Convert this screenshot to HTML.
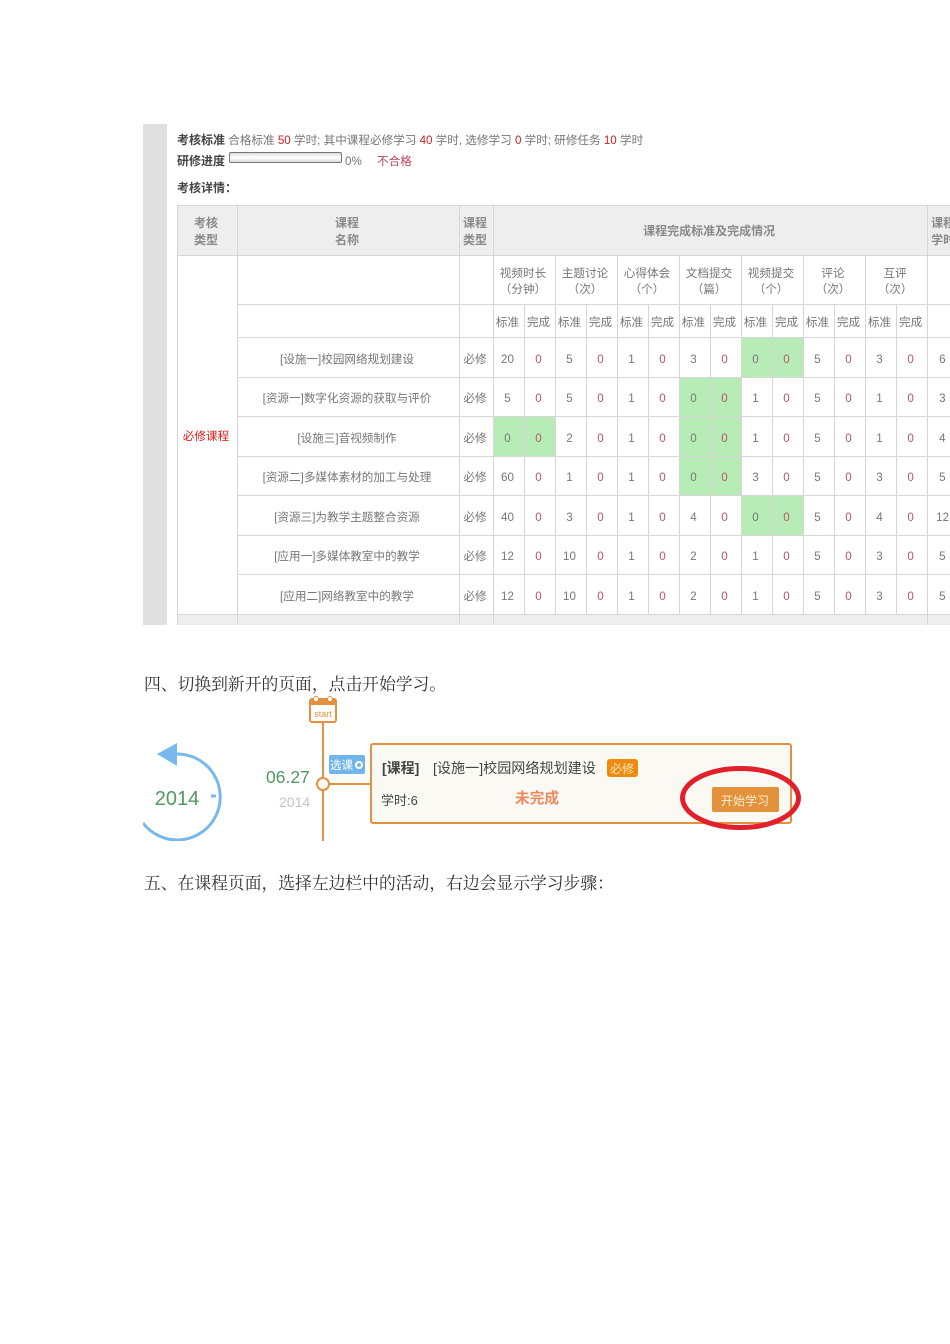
<!DOCTYPE html>
<html lang="zh"><head><meta charset="utf-8"><title>考核详情</title>
<style>
html,body{margin:0;padding:0;background:#fff}
body{position:relative;width:950px;height:1344px;overflow:hidden;font-family:"Liberation Sans","WenQuanYi Zen Hei","Noto Sans CJK SC",sans-serif;font-size:11.6px;color:#777}
.a{position:absolute;white-space:nowrap}
.h{font-family:"Noto Serif CJK SC",serif;font-size:16.8px;color:#333;left:144px}
b{color:#444;font-size:12px}
i{font-style:normal;color:#c22}
table{position:absolute;left:177px;top:205px;border-collapse:collapse;table-layout:fixed;width:810px}
td{border:1px solid #d6d6d6;padding:4px 3px 0 0;text-align:center;line-height:16px;overflow:hidden;white-space:nowrap}
.t td{background:#eee;color:#8a8a8a;font-weight:bold;font-size:12px;line-height:17px;padding-top:2px}
.f td{background:#eee}
.z{color:#b9566a}
.g{background:#b8ecb6}
.l{text-align:left;padding-left:11px}
</style></head><body>
<div class="a" style="left:143px;top:124px;width:24px;height:501px;background:#e0e0e0"></div>
<div class="a" style="left:177px;top:133px;line-height:15px"><b>考核标准</b> 合格标准 <i>50</i> 学时; 其中课程必修学习 <i>40</i> 学时, 选修学习 <i>0</i> 学时; 研修任务 <i>10</i> 学时</div>
<div class="a" style="left:177px;top:154px;line-height:15px"><b>研修进度</b></div>
<div class="a" style="left:229px;top:152px;width:111px;height:9px;border:1px solid #777;border-radius:2px;background:linear-gradient(#ddd,#fff 50%,#ddd)"></div>
<div class="a" style="left:345px;top:154px;line-height:15px">0%</div>
<div class="a" style="left:377px;top:154px;line-height:15px;color:#b9405a">不合格</div>
<div class="a" style="left:177px;top:181px;line-height:15px"><b>考核详情：</b></div>

<div class="a" style="left:0;top:0;width:950px;height:625px;overflow:hidden">
<table>
<colgroup><col style="width:60px"><col style="width:222px"><col style="width:34px"><col span="14" style="width:31px"><col style="width:60px"></colgroup>
<tr class="t" style="height:50px"><td>考核<br>类型</td><td>课程<br>名称</td><td>课程<br>类型</td><td colspan="14">课程完成标准及完成情况</td><td style="text-align:left;padding-left:3px">课程<br>学时</td></tr>
<tr style="height:49px"><td rowspan="9" style="color:#e01c1c;background:#fff">必修课程</td><td></td><td></td><td colspan="2">视频时长<br>（分钟）</td><td colspan="2">主题讨论<br>（次）</td><td colspan="2">心得体会<br>（个）</td><td colspan="2">文档提交<br>（篇）</td><td colspan="2">视频提交<br>（个）</td><td colspan="2">评论<br>（次）</td><td colspan="2">互评<br>（次）</td><td></td></tr>
<tr style="height:33px"><td></td><td></td><td>标准</td><td>完成</td><td>标准</td><td>完成</td><td>标准</td><td>完成</td><td>标准</td><td>完成</td><td>标准</td><td>完成</td><td>标准</td><td>完成</td><td>标准</td><td>完成</td><td></td></tr>
<tr style="height:40px"><td>[设施一]校园网络规划建设</td><td>必修</td><td>20</td><td class="z">0</td><td>5</td><td class="z">0</td><td>1</td><td class="z">0</td><td>3</td><td class="z">0</td><td class="g">0</td><td class="g z">0</td><td>5</td><td class="z">0</td><td>3</td><td class="z">0</td><td class="l">6</td></tr>
<tr style="height:39px"><td>[资源一]数字化资源的获取与评价</td><td>必修</td><td>5</td><td class="z">0</td><td>5</td><td class="z">0</td><td>1</td><td class="z">0</td><td class="g">0</td><td class="g z">0</td><td>1</td><td class="z">0</td><td>5</td><td class="z">0</td><td>1</td><td class="z">0</td><td class="l">3</td></tr>
<tr style="height:40px"><td>[设施三]音视频制作</td><td>必修</td><td class="g">0</td><td class="g z">0</td><td>2</td><td class="z">0</td><td>1</td><td class="z">0</td><td class="g">0</td><td class="g z">0</td><td>1</td><td class="z">0</td><td>5</td><td class="z">0</td><td>1</td><td class="z">0</td><td class="l">4</td></tr>
<tr style="height:39px"><td>[资源二]多媒体素材的加工与处理</td><td>必修</td><td>60</td><td class="z">0</td><td>1</td><td class="z">0</td><td>1</td><td class="z">0</td><td class="g">0</td><td class="g z">0</td><td>3</td><td class="z">0</td><td>5</td><td class="z">0</td><td>3</td><td class="z">0</td><td class="l">5</td></tr>
<tr style="height:40px"><td>[资源三]为教学主题整合资源</td><td>必修</td><td>40</td><td class="z">0</td><td>3</td><td class="z">0</td><td>1</td><td class="z">0</td><td>4</td><td class="z">0</td><td class="g">0</td><td class="g z">0</td><td>5</td><td class="z">0</td><td>4</td><td class="z">0</td><td class="l" style="padding-left:8px">12</td></tr>
<tr style="height:39px"><td>[应用一]多媒体教室中的教学</td><td>必修</td><td>12</td><td class="z">0</td><td>10</td><td class="z">0</td><td>1</td><td class="z">0</td><td>2</td><td class="z">0</td><td>1</td><td class="z">0</td><td>5</td><td class="z">0</td><td>3</td><td class="z">0</td><td class="l">5</td></tr>
<tr style="height:40px"><td>[应用二]网络教室中的教学</td><td>必修</td><td>12</td><td class="z">0</td><td>10</td><td class="z">0</td><td>1</td><td class="z">0</td><td>2</td><td class="z">0</td><td>1</td><td class="z">0</td><td>5</td><td class="z">0</td><td>3</td><td class="z">0</td><td class="l">5</td></tr>
<tr class="f" style="height:20px"><td style="background:#eee"></td><td></td><td></td><td colspan="14"></td><td></td></tr>
</table>
</div>

<div class="a h" style="top:672px;line-height:22px">四、切换到新开的页面，点击开始学习。</div>
<div class="a h" style="top:871px;line-height:22px">五、在课程页面，选择左边栏中的活动，右边会显示学习步骤：</div>

<svg class="a" style="left:0;top:0" width="950" height="900" viewBox="0 0 950 900" font-family="'Liberation Sans','WenQuanYi Zen Hei','Noto Sans CJK SC',sans-serif">
<defs><clipPath id="c"><rect x="143" y="730" width="90" height="111"/></clipPath></defs>
<g clip-path="url(#c)" fill="none" stroke="#78b8ec">
<path d="M176 754A43 43 0 1 1 143 823" stroke-width="3"/>
<path d="M211 796h5" stroke-width="3"/>
</g>
<path d="M157 754L177 743V766Z" fill="#78b8ec"/>
<text x="177" y="805" text-anchor="middle" font-size="20" fill="#4f9a5f">2014</text>
<text x="266" y="783" font-size="17.500" fill="#4f9a5f">06.27</text>
<text x="279" y="807" font-size="14" fill="#c4c4c4">2014</text>
<path d="M323 722V841" stroke="#e3913f" stroke-width="2"/>
<path d="M329 784H371" stroke="#e3913f" stroke-width="2"/>
<circle cx="323" cy="784" r="6" fill="#fff" stroke="#e3913f" stroke-width="2"/>
<rect x="310" y="699" width="26" height="23" rx="2" fill="#fff" stroke="#e3913f" stroke-width="2"/>
<rect x="310" y="699" width="26" height="6" fill="#e3913f"/>
<circle cx="316" cy="699" r="2.500" fill="#fff" stroke="#e3913f"/>
<circle cx="330" cy="699" r="2.500" fill="#fff" stroke="#e3913f"/>
<text x="323" y="717" text-anchor="middle" font-size="9" fill="#e3913f">start</text>
<rect x="329" y="755" width="36" height="19" rx="2" fill="#72b5ec"/>
<text x="330" y="769" font-size="11.500" fill="#fff">选课</text>
<circle cx="359" cy="765" r="3" fill="none" stroke="#fff" stroke-width="2"/>
<rect x="371" y="744" width="420" height="79" rx="2" fill="#fbf9f3" stroke="#e3913f" stroke-width="2"/>
<text x="382" y="773" font-size="14" font-weight="bold" fill="#444">[课程]</text>
<text x="433" y="773" font-size="14.100" fill="#444">[设施一]校园网络规划建设</text>
<rect x="607" y="759" width="31" height="18" rx="3" fill="#ee8a0c"/>
<text x="622" y="773" text-anchor="middle" font-size="12" fill="#ffe9c4">必修</text>
<text x="381" y="805" font-size="13" fill="#444">学时:6</text>
<text x="515" y="803" font-size="14.700" font-weight="bold" fill="#ee8a62">未完成</text>
<rect x="712" y="787" width="67" height="25" rx="2" fill="#e3913a"/>
<text x="745" y="805" text-anchor="middle" font-size="12" fill="#ffeed6">开始学习</text>
<ellipse cx="740.500" cy="798" rx="58" ry="29.500" fill="none" stroke="#e2202c" stroke-width="5"/>
</svg>
</body></html>
